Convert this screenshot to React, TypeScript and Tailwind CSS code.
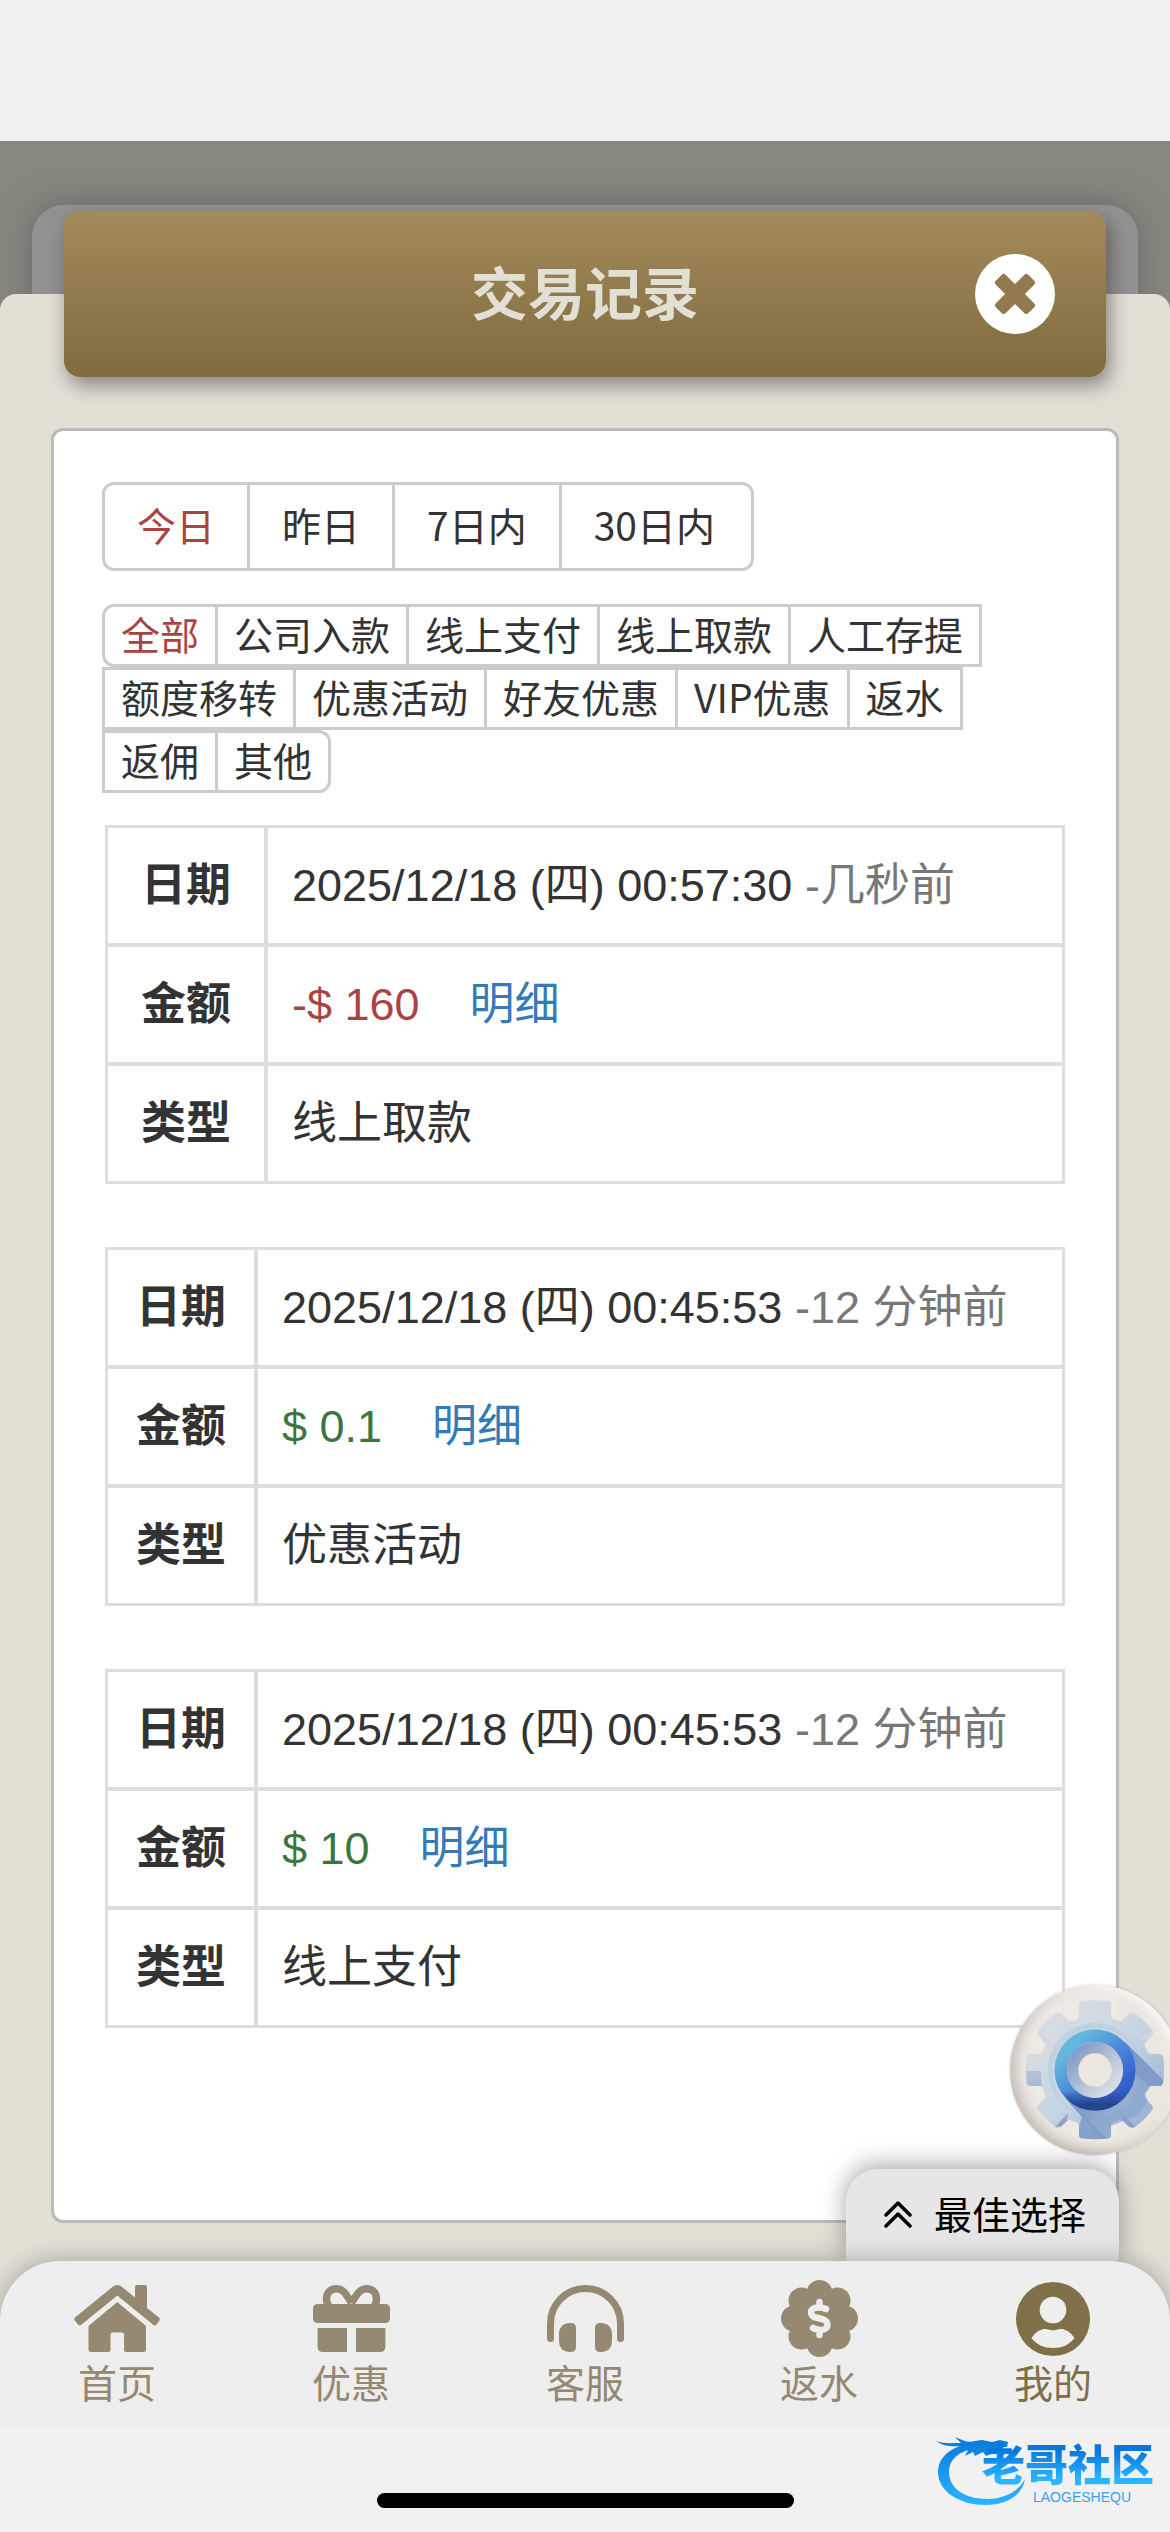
import React, { useState } from "react";

const ranges = ["今日", "昨日", "7日内", "30日内"];

const categories = [
  "全部",
  "公司入款",
  "线上支付",
  "线上取款",
  "人工存提",
  "额度移转",
  "优惠活动",
  "好友优惠",
  "VIP优惠",
  "返水",
  "返佣",
  "其他",
];

interface TransactionRecord {
  date: string;
  ago: string;
  amount: string;
  type: string;
}

const records: TransactionRecord[] = [
  { date: "2025/12/18 (四) 00:57:30", ago: "-几秒前", amount: "-$ 160", type: "线上取款" },
  { date: "2025/12/18 (四) 00:45:53", ago: "-12 分钟前", amount: "$ 0.1", type: "优惠活动" },
  { date: "2025/12/18 (四) 00:45:53", ago: "-12 分钟前", amount: "$ 10", type: "线上支付" },
];

function CloseIcon() {
  return (
    <svg viewBox="0 0 80 80" className="size-20" aria-hidden="true">
      <circle cx="40" cy="40" r="40" fill="#fff" />
      <g fill="#927a4c">
        <rect x="17" y="33" width="46" height="14" rx="3" transform="rotate(45 40 40)" />
        <rect x="17" y="33" width="46" height="14" rx="3" transform="rotate(-45 40 40)" />
      </g>
    </svg>
  );
}

function HomeIcon() {
  return (
    <svg viewBox="0 0 86 67" className="h-[67px] w-[86px]" fill="currentColor" aria-hidden="true">
      <path d="M39 1.5Q43.300 -1.500 47.500 1.500L61 12.500V2Q61 0 63 0H71Q73 0 73 2V23L85 32.500Q86.500 34 85.500 35.500L82.500 39.500Q81 41 79.500 40L43.300 10.500L7 40Q5.500 41 4 39.500L.8 35.500Q-.4 34 1 32.500Z" />
      <path d="M43.300 17L72 41V64.500Q72 67 69.500 67H52.500Q50 67 50 64.500V49.500Q50 47.500 48 47.500H38.500Q36.500 47.500 36.500 49.500V64.500Q36.500 67 34 67H17Q14.500 67 14.500 64.500V41Z" />
    </svg>
  );
}

function GiftIcon() {
  return (
    <svg viewBox="0 0 77 67" className="h-[67px] w-[77px]" fill="currentColor" aria-hidden="true">
      <rect y="19" width="77" height="19" rx="4.500" />
      <path d="M4.600 43H34V67H10Q4.600 67 4.600 61.500ZM43 43H72.400V61.500Q72.400 67 67 67H43Z" />
      <path
        d="M38.500 18C33 9 30 3.700 23.500 3.700C16.500 3.700 13.500 9 13.500 14C13.500 17 14.500 20 16.500 22M38.500 18C44 9 47 3.700 53.500 3.700C60.500 3.700 63.500 9 63.500 14C63.500 17 62.500 20 60.500 22"
        fill="none"
        stroke="currentColor"
        strokeWidth="7.400"
      />
    </svg>
  );
}

function HeadphonesIcon() {
  return (
    <svg viewBox="0 0 77 67" className="h-[67px] w-[77px]" fill="currentColor" aria-hidden="true">
      <path d="M3.500 53.500V38.500a35 35 0 0 1 70 0V53.500" fill="none" stroke="currentColor" strokeWidth="7" strokeLinecap="round" />
      <path d="M22 38H24Q29 38 29 43V62Q29 67 24 67H22Q12 66 12 56V49Q12 39 22 38ZM55 38H53Q48 38 48 43V62Q48 67 53 67H55Q65 66 65 56V49Q65 39 55 38Z" />
    </svg>
  );
}

function RebateIcon() {
  return (
    <svg viewBox="0 0 77 77" className="size-[77px]" fill="currentColor" aria-hidden="true">
      <circle cx="38.500" cy="38.500" r="29" />
      <circle cx="38.500" cy="13" r="13" />
      <circle cx="38.500" cy="64" r="13" />
      <circle cx="13" cy="38.500" r="13" />
      <circle cx="64" cy="38.500" r="13" />
      <circle cx="20.500" cy="20.500" r="13" />
      <circle cx="56.500" cy="20.500" r="13" />
      <circle cx="20.500" cy="56.500" r="13" />
      <circle cx="56.500" cy="56.500" r="13" />
      <path
        d="M38.500 22V27M38.500 50V55M45 29C42 27.500 39.500 27.500 37 27.500C28 27.500 28 36 35 37.500L41 39C49 41 48 50 40 50C37 50 35 49.500 32 48"
        fill="none"
        stroke="#eee"
        strokeWidth="6.500"
        strokeLinecap="round"
        strokeLinejoin="round"
      />
    </svg>
  );
}

function UserIcon() {
  return (
    <svg viewBox="0 0 74 74" className="size-[74px]" aria-hidden="true">
      <circle cx="37" cy="37" r="37" fill="currentColor" />
      <circle cx="37" cy="28" r="13.300" fill="#eee" />
      <path
        d="M15.500 56C20 49.500 25 47 29 47C32 47 33 48.200 37 48.200C41 48.200 42 47 45 47C49 47 54 49.500 58.500 56C53 63 46 66 37 66C28 66 21 63 15.500 56Z"
        fill="#eee"
      />
    </svg>
  );
}

function GearIcon() {
  return (
    <svg viewBox="0 0 170 170" className="size-[170px]" aria-hidden="true">
      <defs>
        <linearGradient id="gearBody" x1="0" y1="0" x2="1" y2="1">
          <stop offset="0" stopColor="#e0dfe3" />
          <stop offset=".5" stopColor="#c8d6e2" />
          <stop offset="1" stopColor="#8ba9d0" />
        </linearGradient>
        <linearGradient id="gearDark" x1="0" y1="0" x2="0" y2="1">
          <stop offset="0" stopColor="#d5dbe4" />
          <stop offset="1" stopColor="#7c98c6" />
        </linearGradient>
        <linearGradient id="gearRing" x1=".1" y1=".2" x2=".75" y2=".9">
          <stop offset="0" stopColor="#67b8dc" />
          <stop offset=".4" stopColor="#4f93db" />
          <stop offset=".85" stopColor="#3b6bd8" />
          <stop offset="1" stopColor="#3460c4" />
        </linearGradient>
        <linearGradient id="gearRingShade" x1="0" y1="0" x2="0" y2="1">
          <stop offset=".8" stopColor="#24468f" stopOpacity="0" />
          <stop offset="1" stopColor="#24468f" />
        </linearGradient>
        <linearGradient id="gearInner" x1=".1" y1=".1" x2=".8" y2=".8">
          <stop offset="0" stopColor="#7796c8" />
          <stop offset=".5" stopColor="#abbbd4" />
          <stop offset="1" stopColor="#d6dce3" />
        </linearGradient>
        <linearGradient id="gearCast" x1=".3" y1=".3" x2=".9" y2=".9">
          <stop offset="0" stopColor="#7590c0" />
          <stop offset="1" stopColor="#8aa8d0" stopOpacity=".4" />
        </linearGradient>
      </defs>
      <path
        fill="url(#gearBody)"
        d="M73 16Q85 14.500 97 16Q101 16.500 101 20V31Q101 34 104 34.500L108 36Q111 37 113 34.500L119 28.500Q122 26 125 28.500Q136 36 142 45Q144 48 141.500 50.500L136 56Q134 58 135 61L137.500 67Q138.500 69 141 69H148Q153 69 153.500 73Q154.500 85 153.500 97Q153 101 149 101H141Q138.500 101 137.500 103L135 109Q134 111.500 136 114L141.500 119.500Q144 122 142 125Q136 134 125 142Q122 144 119 141.500L113 136Q111 134.500 108 135.500L103 137.500Q101 138.500 101 141V150Q101 153.500 97 153.500Q85 155 73 153.500Q69 153.500 69 150V141Q69 138.500 67 137.500L62 135.500Q59 134.500 57 136L51 141.500Q48 144 45 142Q36 135 28 125Q26 122 28.500 119.500L34 114Q36 111.500 35 109L32.500 103Q31.500 101 29 101H21Q17 101 16.500 97Q15.500 85 16.500 73Q17 69 22 69H29Q31.500 69 32.500 67L35 61Q36 58 34 56L28.500 50.500Q26 48 28 45Q35 35 45 28.500Q48 26 51 28.500L57 34.500Q59 36.500 62 36L66 34.500Q69 34 69 31V20Q69 16.500 73 16Z"
      />
      {/* darker ends of the teeth */}
      <path fill="url(#gearDark)" opacity=".85" d="M16 86H31L31.500 101H21Q17 101 16.500 97ZM28 47L40 52L34 58L28.500 50.500ZM142 47L130 52L136 58L141.500 50.500ZM45 142L58 128L57 136L51 141.500ZM125 142L112 128L113 136L119 141.500Z" />
      <circle cx="85" cy="85" r="47" fill="#b8cfdf" opacity=".75" />
      <circle cx="86" cy="87" r="44" fill="#d3dae6" opacity=".5" />
      <path fill="url(#gearCast)" d="M115 57L153 95Q153 101 149 101H141L135 109L138 116Q132 132 113 136L101 141V150Q101 153.500 97 153.500H92L57 115Z" />
      <path fill="#7c98c6" opacity=".8" d="M115 57L153 95Q153 101 149 101H139L125 88ZM57 115L92 149L97 153.500Q85 155 73 153.500Q69 153.500 69 150V141L72 132Z" />
      <circle cx="85" cy="85" r="34.300" fill="none" stroke="url(#gearRing)" strokeWidth="12.400" />
      <circle cx="85" cy="85" r="34.300" fill="none" stroke="url(#gearRingShade)" strokeWidth="12.400" />
      <circle cx="85" cy="85" r="28" fill="url(#gearInner)" />
      <circle cx="85" cy="85" r="16.700" fill="#ece8e1" />
    </svg>
  );
}

function CommunityLogo() {
  return (
    <div className="absolute top-1 right-4 flex items-start">
      <svg viewBox="20 14 94 76" className="h-[76px] w-[94px] shrink-0" aria-hidden="true">
        <defs>
          <linearGradient id="dragon" x1="0" y1="0" x2="0" y2="1">
            <stop offset="0" stopColor="#0678dc" />
            <stop offset="1" stopColor="#2bb4ff" />
          </linearGradient>
        </defs>
        <path
          fill="url(#dragon)"
          d="M22 21C30 24 37 23 47 23L41 17C50 21 55 23 61 21L68 20L78 22L86 20L94 22L93 27L82 27L92 32L90 35L80 33L72 36L69 32L61 36L59 32L51 36L54 30C42 34 35 41 35 52C35 68 50 79 74 79C90 79 104 72 111 59C108 76 92 85 72 85C46 85 24 72 24 52C24 40 32 31 46 26C38 27 29 26 22 21Z"
        />
      </svg>
      <div className="z-10 -ml-[46px] flex flex-col items-center">
        <span className="bg-linear-to-b from-[#0678dc] from-30% to-[#2bb4ff] to-80% bg-clip-text text-[43px] leading-[56px] font-black text-transparent">
          老哥社区
        </span>
        <span className="pl-[28px] font-['Liberation_Sans',sans-serif] text-[14px] leading-[14px] text-[#3f9fe8]">LAOGESHEQU</span>
      </div>
    </div>
  );
}

function RecordTable({ record }: { record: TransactionRecord }) {
  const isExpense = record.amount.startsWith("-");
  const label = "border-r-4 border-[#ddd] px-7 text-center font-bold whitespace-nowrap";
  const cell = "w-full border-[#ddd] px-6";
  return (
    <table className="w-full border-separate border-spacing-0 border-3 border-[#ddd] font-['Liberation_Sans','Noto_Sans_CJK_SC',sans-serif] text-[45px] leading-[64px] text-[#333]">
      <tbody>
        <tr className="h-[119px]">
          <th scope="row" className={`${label} border-b-4 ${isExpense ? "min-w-[160px]" : "min-w-[149px]"}`}>日期</th>
          <td className={`${cell} border-b-4`}>
            {record.date} <span className="text-[#777]">{record.ago}</span>
          </td>
        </tr>
        <tr className="h-[119px]">
          <th scope="row" className={`${label} border-b-4`}>金额</th>
          <td className={`${cell} border-b-4`}>
            <span className={isExpense ? "text-[#a94442]" : "text-[#3c763d]"}>{record.amount}</span>
            <a href="#detail" className="ml-[50px] text-[#337ab7]">明细</a>
          </td>
        </tr>
        <tr className="h-[115px]">
          <th scope="row" className={label}>类型</th>
          <td className={cell}>{record.type}</td>
        </tr>
      </tbody>
    </table>
  );
}

const navItems = [
  { label: "首页", icon: <HomeIcon /> },
  { label: "优惠", icon: <GiftIcon /> },
  { label: "客服", icon: <HeadphonesIcon /> },
  { label: "返水", icon: <RebateIcon /> },
  { label: "我的", icon: <UserIcon />, active: true },
];

export default function App() {
  const [range, setRange] = useState("今日");
  const [category, setCategory] = useState("全部");

  return (
    <div className="flex min-h-screen flex-col overflow-hidden bg-[#f1f1f1] font-['Noto_Sans_CJK_SC',sans-serif]">
      {/* status bar space */}
      <div className="h-[141px] shrink-0" />

      <main className="relative flex flex-1 flex-col bg-[#87877f] pt-[70px]">
        <div className="absolute inset-x-8 top-16 h-[120px] rounded-t-[32px] bg-[#929292] shadow-[0_0_32px_rgba(80,80,80,0.5)]" />

        <header className="relative z-10 mx-16 grid h-[166px] grid-cols-[1fr_auto_1fr] items-center rounded-2xl bg-linear-to-b from-[#a38a5a] to-[#806b3f] px-[51px] shadow-[4px_8px_20px_rgba(60,50,60,0.55)]">
          <h1 className="col-start-2 pb-2 text-[57px] leading-[80px] font-bold text-[#e2e0d5]">交易记录</h1>
          <button type="button" aria-label="关闭" className="justify-self-end">
            <CloseIcon />
          </button>
        </header>

        <div className="relative -mt-[83px] flex flex-1 flex-col rounded-t-2xl bg-[#e2e0d5] px-[51px] pt-[134px] pb-[38px]">
          <section className="flex-1 rounded-xl border-3 border-[#bbb] bg-white px-12 pt-[51px] pb-16">
            <div className="flex pl-[3px]">
              {ranges.map((item) => (
                <button
                  key={item}
                  type="button"
                  onClick={() => setRange(item)}
                  className={`-ml-[3px] h-[89px] border-3 border-[#ccc] px-8 pb-1.5 text-[39px] leading-[56px] first:rounded-l-xl last:rounded-r-xl last:pr-9 ${
                    range === item ? "text-[#a94442]" : "text-[#333]"
                  }`}
                >
                  {item}
                </button>
              ))}
            </div>

            <div className="mt-[33px] flex flex-wrap pl-[3px]">
              {categories.map((item) => (
                <button
                  key={item}
                  type="button"
                  onClick={() => setCategory(item)}
                  className={`-ml-[3px] flex h-[63px] items-center border-3 border-[#ccc] px-4 pb-1.5 text-[39px] leading-[50px] first:rounded-l-xl last:rounded-r-xl ${
                    category === item ? "text-[#a94442]" : "text-[#333]"
                  }`}
                >
                  {item}
                </button>
              ))}
            </div>

            <div className="mx-[3px] mt-8 flex flex-col gap-[63px]">
              {records.map((record, i) => (
                <RecordTable key={i} record={record} />
              ))}
            </div>
          </section>
        </div>
      </main>

      <footer className="relative shrink-0 bg-[#e2e0d5]">
        <button
          type="button"
          aria-label="设置"
          className="absolute -right-[10px] bottom-full mb-[106px] size-[170px] rounded-full bg-[#ece8e1]/95 shadow-[inset_6px_-4px_12px_rgba(120,110,95,0.35),inset_-3px_3px_6px_rgba(255,255,255,0.9),0_0_3px_rgba(120,120,120,0.4)]"
        >
          <GearIcon />
        </button>
        <button
          type="button"
          className="absolute right-[51px] bottom-full flex h-[92px] items-center gap-[22px] rounded-t-[32px] bg-[#e6e6e6] pr-[33px] pl-[38px] text-[38px] leading-[56px] text-black shadow-[0_-4px_24px_rgba(0,0,0,0.35)]"
        >
          <svg viewBox="0 0 28 28" className="size-7" fill="none" stroke="currentColor" strokeWidth="3.500" strokeLinecap="round" strokeLinejoin="round" aria-hidden="true">
            <path d="M2 14L14 2L26 14M2 25L14 13L26 25" />
          </svg>
          <span className="pb-1">最佳选择</span>
        </button>

        <nav className="relative z-10 grid grid-cols-5 rounded-t-[60px] bg-[#eee] pt-[19px] pb-[22px] shadow-[0_-2px_24px_rgba(0,0,0,0.25)]">
          {navItems.map((item) => (
            <a
              key={item.label}
              href="#nav"
              className={`flex flex-col items-center ${item.active ? "text-[#80704a]" : "text-[#958971]"}`}
            >
              <span className="flex h-[77px] items-center">{item.icon}</span>
              <span className="text-[39px] leading-[48px] pb-[3px]">{item.label}</span>
            </a>
          ))}
        </nav>

        {/* home indicator */}
        <div className="relative z-20 flex h-[102px] items-end justify-center bg-[#f1f1f1] pb-6">
          <div className="h-[15px] w-[417px] rounded-full bg-black" />
          <CommunityLogo />
        </div>
      </footer>
    </div>
  );
}
